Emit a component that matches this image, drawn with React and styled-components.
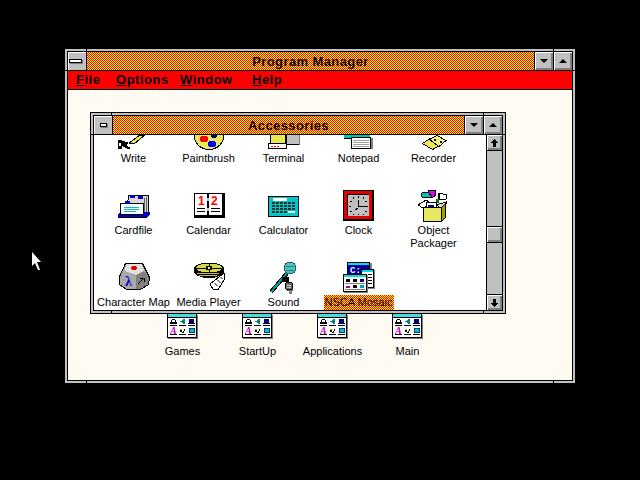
import React from 'react';
import styled, { createGlobalStyle } from 'styled-components';

const GlobalStyle = createGlobalStyle`
    html, body {
        margin: 0;
        padding: 0;
        background: #000;
    }
`;

const checker = `url("data:image/svg+xml,%3Csvg xmlns='http://www.w3.org/2000/svg' width='2' height='2' shape-rendering='crispEdges'%3E%3Crect width='2' height='2' fill='red'/%3E%3Crect width='1' height='1' fill='yellow'/%3E%3Crect x='1' y='1' width='1' height='1' fill='yellow'/%3E%3C/svg%3E")`;

const Desktop = styled.div`
    position: relative;
    width: 640px;
    height: 480px;
    overflow: hidden;
    background: #000;
    font-family: "Liberation Sans", Arial, sans-serif;
    color: #000;
`;

const Cursor = styled.svg`
    position: absolute;
    left: 32px;
    top: 252px;
    display: block;
`;

const WindowFrame = styled.div`
    position: absolute;
    left: ${p => p.$left}px;
    top: ${p => p.$top}px;
    width: ${p => p.$width}px;
    height: ${p => p.$height}px;
    box-sizing: border-box;
    padding: 2px;
    background: #c0c0c0;
    border: ${p => (p.$outlined ? '1px solid #000' : 'none')};
    display: flex;
`;

const Tick = styled.i`
    position: absolute;
    background: #000;
    ${p => p.$h
        ? `height: 1px; width: 2px; top: ${p.$at}px; ${p.$side}: 0;`
        : `width: 1px; height: 2px; left: ${p.$at}px; ${p.$side}: 0;`}
`;

const WindowInner = styled.div`
    flex: 1;
    min-width: 0;
    display: flex;
    flex-direction: column;
    border: 1px solid #000;
    background: #000;
    gap: 1px;
`;

const TitleRow = styled.div`
    display: flex;
    gap: 1px;
    height: 18px;
    flex: none;
`;

const TitleBar = styled.div`
    flex: 1;
    background: ${checker};
    font-size: 13px;
    font-weight: 700;
    line-height: 20px;
    letter-spacing: 0.4px;
    text-align: center;
    white-space: nowrap;
    overflow: hidden;
`;

const Bevel = styled.div`
    width: 18px;
    height: 18px;
    flex: none;
    box-sizing: border-box;
    background: #c0c0c0;
    box-shadow: inset 1px 1px #fff, inset -2px -2px #808080;
    display: flex;
    align-items: center;
    justify-content: center;
`;

const SysButton = styled(Bevel)`
    box-shadow: inset 1px 1px #fff;
`;

const SysBar = styled.div`
    width: ${p => (p.$small ? 5 : 11)}px;
    height: 2px;
    background: #fff;
    border: 1px solid #000;
    box-sizing: content-box;
    box-shadow: 1px 1px #808080;
    margin-left: ${p => (p.$small ? 0 : -3)}px;
`;

const ArrowDown = styled.div`
    width: 0;
    height: 0;
    border-left: 4px solid transparent;
    border-right: 4px solid transparent;
    border-top: 4px solid #000;
`;

const ArrowUp = styled(ArrowDown)`
    border-top: none;
    border-bottom: 4px solid #000;
`;

const MenuBar = styled.div`
    height: 18px;
    flex: none;
    display: flex;
    background: #ff0000;
    padding-left: 8px;
    font-size: 13px;
    font-weight: 700;
    line-height: 18px;
    letter-spacing: 0.5px;
`;

const MenuItem = styled.span`
    width: ${p => p.$width}px;
    flex: none;
    u { text-underline-offset: 1px; }
`;

const Client = styled.div`
    flex: 1;
    background: #fffaf2;
    padding: 224px 0 0 77px;
`;

const GroupRow = styled.div`
    display: grid;
    grid-template-columns: repeat(4, 75px);
`;

const GroupItem = styled.div`
    display: flex;
    flex-direction: column;
    align-items: center;
`;

const GroupLabel = styled.div`
    font-size: 11px;
    line-height: 13px;
    margin-top: 6px;
    white-space: nowrap;
`;

const ChildBody = styled.div`
    flex: 1;
    min-height: 0;
    display: flex;
    background: #fff;
`;

const IconArea = styled.div`
    flex: 1;
    min-width: 0;
    overflow: hidden;
    padding-left: 2px;
`;

const IconGrid = styled.div`
    display: grid;
    grid-template-columns: repeat(5, 75px);
    grid-auto-rows: 72px;
    margin-top: -17px;
`;

const IconItem = styled.div`
    display: flex;
    flex-direction: column;
    align-items: center;
`;

const IconLabel = styled.div`
    margin-top: 1px;
    padding: 1px 0;
    font-size: 11px;
    line-height: 13px;
    text-align: center;
    white-space: ${p => (p.$wrap ? 'normal' : 'nowrap')};
    width: ${p => (p.$wrap || p.$selected ? '70px' : 'auto')};
    box-sizing: border-box;
    background: ${p => (p.$selected ? checker : 'transparent')};
    background-position: 1px 0;
`;

const ScrollBar = styled.div`
    width: 16px;
    flex: none;
    box-sizing: border-box;
    border-left: 1px solid #000;
    background: #c0c0c0;
    display: flex;
    flex-direction: column;
`;

const ScrollButton = styled(Bevel)`
    width: 15px;
    height: 16px;
    border-${p => p.$edge}: 1px solid #000;
`;

const ScrollTrack = styled.div`
    flex: 1;
    padding-top: ${p => p.$offset}px;
`;

const ScrollThumb = styled.div`
    height: 17px;
    box-sizing: border-box;
    border-top: 1px solid #000;
    border-bottom: 1px solid #000;
    background: #c0c0c0;
    box-shadow: inset 1px 1px #fff, inset -2px -2px #808080;
`;

const Glyph = styled.svg`
    display: block;
    flex: none;
    shape-rendering: crispEdges;
    overflow: hidden;
`;

const Icon = ({ children, h = 32, w = 32 }) => (
    <Glyph width={w} height={h} viewBox={`0 0 ${w} ${h}`}>{children}</Glyph>
);

const GroupMinis = ({ x = 0, y = 0 }) => (
    <g transform={`translate(${x} ${y})`}>
        <path d="M2 0h3v1H2z M1 1h1v3H1z M5 1h1v3H5z M0 3h7v2H0z" fill="#000" />
        <path d="M0 6h7v1H0z" fill="#000" />
        <path d="M13 0h2v5h-2v-1h-1v-1h-1v-1h1v-1h1z M10 2h1v1h-1z" fill="#008080" />
        <path d="M9 6h7v1H9z" fill="#000" />
        <rect x="19" y="0" width="5" height="4" fill="#000080" />
        <path d="M18 4h7v1h-7z M18 6h7v1h-7z" fill="#000" />
        <text x="0" y="15" fontFamily="Liberation Serif, serif" fontStyle="italic" fontWeight="700" fontSize="10" fill="#c000c0">A</text>
        <path d="M0 15h7v1H0z" fill="#000" />
        <path d="M10 11h2v2h1v-1h1v-2h1v2h-1v2h-2v-1h-2z" fill="#000" />
        <rect x="10" y="10" width="2" height="1" fill="#c0c000" />
        <path d="M9 15h7v1H9z" fill="#000" />
        <rect x="19.5" y="9.5" width="5" height="4" fill="#00c0e0" stroke="#004060" />
        <path d="M18 15h7v1h-7z" fill="#000" />
    </g>
);

const GroupIcon = () => (
    <Icon w={31} h={25}>
        <rect x="1" y="1" width="30" height="24" fill="#808080" />
        <rect x="0.5" y="-0.5" width="29" height="24" fill="#fff" stroke="#000" />
        <rect x="1" y="0" width="28" height="3" fill="#40e0e0" />
        <rect x="1" y="3" width="28" height="1" fill="#000" />
        <GroupMinis x={3} y={5} />
    </Icon>
);

const WriteIcon = () => (
    <Icon>
        <polygon points="11,25 22,17 27,17 16,26" fill="#e8e850" stroke="#000" />
        <path d="M0 22h3l8 3-3 2 5 3-3 1-6-3v3H0z" fill="#000" />
        <rect x="1" y="25" width="2" height="3" fill="#fff" />
    </Icon>
);

const PaintIcon = () => (
    <Icon>
        <ellipse cx="16" cy="17" rx="15" ry="14.5" fill="#e8e858" stroke="#000" />
        <ellipse cx="11" cy="21" rx="4" ry="3.5" fill="#ff0000" />
        <ellipse cx="19" cy="26" rx="4.5" ry="3" fill="#0000ff" />
        <ellipse cx="21" cy="18" rx="3" ry="2" fill="#000080" />
    </Icon>
);

const TerminalIcon = () => (
    <Icon>
        <rect x="18" y="15" width="13" height="11" fill="#c0c0c0" stroke="#000" />
        <rect x="31" y="16" width="1" height="11" fill="#808080" />
        <rect x="2" y="15" width="15" height="11" fill="#e8e850" stroke="#000" />
        <rect x="0.5" y="25.5" width="18" height="5" fill="#fff" stroke="#000" />
        <path d="M3 28h2v1H3z M6 28h2v1H6z M9 28h2v1H9z" fill="#ff0000" />
    </Icon>
);

const NotepadIcon = () => (
    <Icon>
        <rect x="1" y="17" width="26" height="3" fill="#00c0c0" />
        <rect x="1" y="20" width="7" height="1" fill="#000" />
        <rect x="8.5" y="19.5" width="19" height="11" fill="#fff" stroke="#000" />
        <rect x="28" y="20" width="2" height="11" fill="#808080" />
        <path d="M10 22h16v1H10z M10 24h16v1H10z M10 26h16v1H10z M10 28h16v1H10z" fill="#a0a0a0" />
    </Icon>
);

const RecorderIcon = () => (
    <Icon>
        <polygon points="4.5,25.5 12,20.5 22,27.5 14.5,31.5" fill="#e8e850" stroke="#000" />
        <polygon points="11.5,21.5 19,17.5 28,22.5 21,28.5" fill="#f4f480" stroke="#000" />
        <path d="M16 21h2v2h-2z M22 23h2v2h-2z" fill="#000" />
    </Icon>
);

const CardfileIcon = () => (
    <Icon>
        <polygon points="10.5,5.5 30.5,5.5 30.5,24.5 8.5,24.5" fill="#d8d8d8" stroke="#000" />
        <path d="M28 7h1v16h-1z M26 8h1v15h-1z" fill="#606060" />
        <rect x="12" y="5" width="5" height="3" fill="#0000c0" />
        <rect x="20" y="6" width="5" height="3" fill="#0000c0" />
        <polygon points="0,25 2,22 30,22 32,22 32,24 28,28 0,28" fill="#0000c0" />
        <rect x="0" y="27" width="29" height="1" fill="#000" />
        <rect x="2.5" y="13.5" width="23" height="11" fill="#fff" stroke="#000" />
        <rect x="7" y="11" width="5" height="3" fill="#0000c0" />
        <path d="M6 17h15v1H6z M6 19h15v1H6z M6 21h12v1H6z" fill="#00c0c0" />
    </Icon>
);

const CalendarIcon = () => (
    <Icon>
        <rect x="1" y="3" width="31" height="25" fill="#000" />
        <rect x="2" y="4" width="12" height="21" fill="#fff" />
        <rect x="16" y="4" width="13" height="21" fill="#fff" />
        <rect x="14" y="8" width="2" height="3" fill="#c0c0c0" />
        <rect x="14" y="18" width="2" height="3" fill="#c0c0c0" />
        <text x="5" y="15" fontFamily="Liberation Sans, sans-serif" fontWeight="700" fontSize="12" fill="#ff0000">1</text>
        <text x="18" y="15" fontFamily="Liberation Sans, sans-serif" fontWeight="700" fontSize="12" fill="#ff0000">2</text>
        <path d="M4 18h8v1H4z M4 21h8v1H4z M18 18h9v1h-9z M18 21h9v1h-9z" fill="#000" />
    </Icon>
);

const CalculatorIcon = () => {
    const keys = [];
    for (let r = 0; r < 4; r++) {
        for (let c = 0; c < 6; c++) {
            if (r === 3 && c > 3) continue;
            keys.push(<rect key={`${r}-${c}`} x={4 + c * 4} y={12 + r * 3} width="3" height="2" fill="#003838" />);
        }
    }
    return (
        <Icon>
            <rect x="0.5" y="6.5" width="30" height="20" fill="#00c8c8" stroke="#000" />
            <path d="M30 8v18" stroke="#8000c0" strokeDasharray="1 1" />
            <rect x="5" y="8" width="14" height="3" fill="#fff" />
            {keys}
            <rect x="20" y="21" width="7" height="2" fill="#fff" />
        </Icon>
    );
};

const ClockIcon = () => (
    <Icon>
        <rect x="0" y="0" width="31" height="31" fill="#000" />
        <rect x="1" y="1" width="28" height="28" fill="#e00000" />
        <rect x="4" y="4" width="22" height="22" fill="#000" />
        <rect x="5" y="5" width="21" height="21" fill="#c0c0c0" />
        <path d="M15 6h1v2h-1z M10 7h1v2h-1z M20 7h1v2h-1z M7 11h2v1H7z M22 11h2v1h-2z M6 16h2v1H6z M23 16h2v1h-2z M7 21h2v1H7z M22 21h2v1h-2z M10 24h1v1h-1z M20 24h1v1h-1z M15 24h1v1h-1z" fill="#000" />
        <path d="M15 10h1v7h-1z M15 16h8v1h-8z M13 18h2v1h-2z M12 19h2v1h-2z" fill="#000" />
    </Icon>
);

const PackagerIcon = () => (
    <Icon>
        <ellipse cx="9" cy="5" rx="6" ry="3" fill="#00c0c0" stroke="#000" />
        <polygon points="10,1 17,0 18,5 14,8" fill="#e000e0" stroke="#000" />
        <path d="M20 3h1v7h-1z" fill="#000" />
        <rect x="18" y="9" width="3" height="4" fill="#008000" />
        <polygon points="21,3 29,5 28,9 21,9" fill="#fff" stroke="#000" />
        <polygon points="0,15 8,10 14,14 5,18" fill="#fff" stroke="#000" />
        <rect x="8.5" y="12.5" width="10" height="6" fill="#fff" stroke="#000" />
        <rect x="10" y="15" width="6" height="2" fill="#0000c0" />
        <polygon points="18,15 28,12 28,14 23,18" fill="#e0e0e0" stroke="#000" />
        <rect x="5.5" y="17.5" width="18" height="14" fill="#e8e860" stroke="#000" />
        <polygon points="23.5,17.5 27.5,13.5 27.5,27.5 23.5,31.5" fill="#a0a000" stroke="#000" />
    </Icon>
);

const CharMapIcon = () => (
    <Icon>
        <polygon points="7.5,1.5 24.5,1.5 31.5,15.5 30.5,22.5 22.5,27.5 8.5,27.5 1.5,22.5 1.5,14.5" fill="#a8a8a8" stroke="#000" />
        <polygon points="8,2 24,2 26,9 18,13 7,9" fill="#e0e0e0" />
        <polygon points="18,13 26,9 31,16 30,22 22,27 18,27" fill="#808080" />
        <ellipse cx="16" cy="6" rx="3" ry="2" fill="#e00000" />
        <text x="7" y="24" fontFamily="Liberation Serif, serif" fontWeight="700" fontSize="14" fill="#0000e0">λ</text>
        <path d="M20 22l6-6M22 16h4v4" stroke="#000" fill="none" />
    </Icon>
);

const MediaIcon = () => (
    <Icon>
        <polygon points="31,11 32,16 25,28 20,27 17,22" fill="#fff" stroke="#000" />
        <path d="M21 21l4 3M24 18l4 3M27 15l3 2" stroke="#808080" />
        <ellipse cx="16" cy="9.5" rx="15" ry="6.5" fill="#000" />
        <ellipse cx="16" cy="6.5" rx="15" ry="6" fill="#000" />
        <ellipse cx="16" cy="6" rx="13" ry="4.5" fill="#d8d840" />
        <path d="M3 6h26M16 2v8" stroke="#000" />
        <rect x="13" y="4" width="6" height="4" fill="#000" />
        <rect x="15" y="5" width="2" height="2" fill="#ff0" />
        <path d="M4 11h22M6 13h18" stroke="#c0c040" />
    </Icon>
);

const SoundIcon = () => (
    <Icon>
        <rect x="19" y="22" width="6" height="7" fill="#606060" />
        <rect x="21" y="28" width="3" height="4" fill="#808080" />
        <path d="M3 30L20 10" stroke="#000" strokeWidth="4" fill="none" />
        <path d="M3 30L20 10" stroke="#00a0a0" strokeWidth="2" fill="none" />
        <rect x="14" y="15" width="7" height="5" fill="#000" />
        <circle cx="22" cy="6" r="6" fill="#50c0c0" stroke="#206060" />
        <path d="M18 4h8M18 8h8" stroke="#208080" />
        <circle cx="21" cy="24" r="4" fill="#707070" stroke="#000" />
        <path d="M19 23h4M19 25h4" stroke="#c0c0c0" />
    </Icon>
);

const MosaicIcon = () => (
    <Icon>
        <rect x="5" y="1" width="24" height="16" fill="#808080" />
        <rect x="4.5" y="0.5" width="22" height="15" fill="#0000a0" stroke="#000" />
        <rect x="5" y="1" width="21" height="2" fill="#00e0e0" />
        <text x="7" y="11" fontFamily="Liberation Mono, monospace" fontWeight="700" fontSize="9" fill="#fff">C:</text>
        <rect x="19" y="8" width="13" height="19" fill="#808080" />
        <rect x="18.5" y="7.5" width="12" height="18" fill="#fff" stroke="#000" />
        <rect x="19" y="8" width="11" height="2" fill="#00e0e0" />
        <path d="M25 12h4v1h-4z M25 15h4v1h-4z M25 18h4v1h-4z M25 21h4v1h-4z" fill="#000" />
        <rect x="1" y="13" width="24" height="18" fill="#808080" />
        <rect x="0.5" y="12.5" width="23" height="17" fill="#fff" stroke="#000" />
        <rect x="1" y="13" width="22" height="2" fill="#00e0e0" />
        <path d="M3 17h4v3H3z M10 17h4v3h-4z" fill="#000" />
        <path d="M17 17h4v3h-4z" fill="#000080" />
        <path d="M3 24h4v2H3z" fill="#a000a0" />
        <path d="M10 23h4v3h-4z" fill="#000" />
        <path d="M17 23h4v3h-4z" fill="#00a0c0" />
        <path d="M2 21h20v1H2z M2 27h20v1H2z" fill="#808080" />
    </Icon>
);

const ScrollArrow = ({ down }) => (
    <Glyph width="9" height="8" viewBox="0 0 9 8">
        <path d={down ? 'M3 0h3v4h3L4.5 8 0 4h3z' : 'M4.5 0L9 4H6v4H3V4H0z'} fill="#000" />
    </Glyph>
);

const accessories = [
    { label: 'Write', icon: <WriteIcon /> },
    { label: 'Paintbrush', icon: <PaintIcon /> },
    { label: 'Terminal', icon: <TerminalIcon /> },
    { label: 'Notepad', icon: <NotepadIcon /> },
    { label: 'Recorder', icon: <RecorderIcon /> },
    { label: 'Cardfile', icon: <CardfileIcon /> },
    { label: 'Calendar', icon: <CalendarIcon /> },
    { label: 'Calculator', icon: <CalculatorIcon /> },
    { label: 'Clock', icon: <ClockIcon /> },
    { label: 'Object Packager', icon: <PackagerIcon />, wrap: true },
    { label: 'Character Map', icon: <CharMapIcon /> },
    { label: 'Media Player', icon: <MediaIcon /> },
    { label: 'Sound', icon: <SoundIcon /> },
    { label: 'NSCA Mosaic', icon: <MosaicIcon />, selected: true },
];

const groups = ['Games', 'StartUp', 'Applications', 'Main'];

const menus = [
    { first: 'F', rest: 'ile', width: 40 },
    { first: 'O', rest: 'ptions', width: 64 },
    { first: 'W', rest: 'indow', width: 72 },
    { first: 'H', rest: 'elp', width: 40 },
];

function WindowTitle({ title, small }) {
    return (
        <TitleRow>
            <SysButton><SysBar $small={small} /></SysButton>
            <TitleBar>{title}</TitleBar>
            <Bevel><ArrowDown /></Bevel>
            <Bevel><ArrowUp /></Bevel>
        </TitleRow>
    );
}

function App() {
    return (
        <Desktop>
            <GlobalStyle />
            <WindowFrame $left={65} $top={49} $width={510} $height={334}>
                <Tick $at={21} $side="top" />
                <Tick $at={488} $side="top" />
                <Tick $at={21} $side="bottom" />
                <Tick $at={488} $side="bottom" />
                <Tick $h $at={21} $side="left" />
                <Tick $h $at={21} $side="right" />
                <WindowInner>
                    <WindowTitle title="Program Manager" />
                    <MenuBar>
                        {menus.map(m => (
                            <MenuItem key={m.first} $width={m.width}><u>{m.first}</u>{m.rest}</MenuItem>
                        ))}
                    </MenuBar>
                    <Client>
                        <GroupRow>
                            {groups.map(g => (
                                <GroupItem key={g}>
                                    <GroupIcon />
                                    <GroupLabel>{g}</GroupLabel>
                                </GroupItem>
                            ))}
                        </GroupRow>
                    </Client>
                </WindowInner>
            </WindowFrame>
            <WindowFrame $outlined $left={90} $top={112} $width={416} $height={202}>
                <Tick $at={20} $side="top" />
                <Tick $at={392} $side="top" />
                <Tick $at={20} $side="bottom" />
                <Tick $at={392} $side="bottom" />
                <Tick $h $at={21} $side="left" />
                <Tick $h $at={21} $side="right" />
                <WindowInner>
                    <WindowTitle title="Accessories" small />
                    <ChildBody>
                        <IconArea>
                            <IconGrid>
                                {accessories.map(a => (
                                    <IconItem key={a.label}>
                                        {a.icon}
                                        <IconLabel $wrap={a.wrap} $selected={a.selected}>{a.label}</IconLabel>
                                    </IconItem>
                                ))}
                            </IconGrid>
                        </IconArea>
                        <ScrollBar>
                            <ScrollButton $edge="bottom"><ScrollArrow /></ScrollButton>
                            <ScrollTrack $offset={75}><ScrollThumb /></ScrollTrack>
                            <ScrollButton $edge="top"><ScrollArrow down /></ScrollButton>
                        </ScrollBar>
                    </ChildBody>
                </WindowInner>
            </WindowFrame>
            <Cursor width="10" height="19" viewBox="0 0 10 19">
                <path d="M0 0v14l3-3 3 7h2l-3-8h4z" fill="#fff" />
            </Cursor>
        </Desktop>
    );
}

export default App;
